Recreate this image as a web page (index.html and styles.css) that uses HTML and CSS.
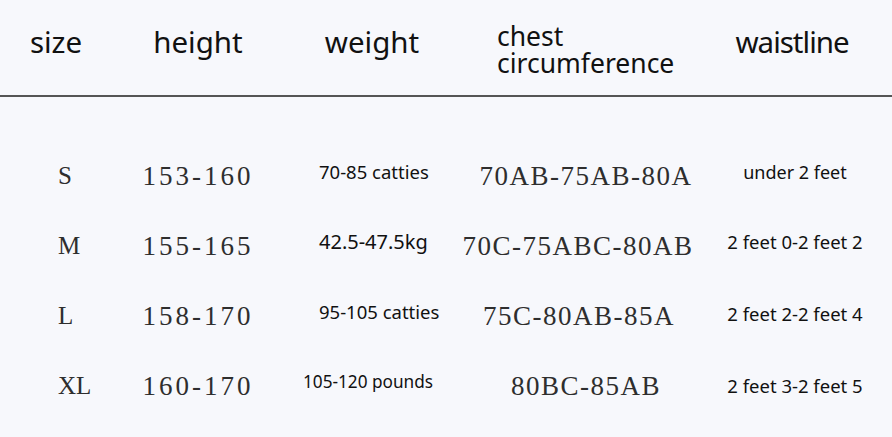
FILE: index.html
```html
<!DOCTYPE html>
<html>
<head>
<meta charset="utf-8">
<link rel="stylesheet" href="styles.css">
</head>
<body>
<div class="chart">
  <div class="head">
    <div class="h c-size">size</div>
    <div class="h c-height">height</div>
    <div class="h c-weight">weight</div>
    <div class="h c-chest"><div class="ln">chest</div><div class="ln">circumference</div></div>
    <div class="h c-waist">waistline</div>
  </div>
  <div class="body">
    <div class="row">
      <div class="d size">S</div>
      <div class="d serif height">153-160</div>
      <div class="d sans weight up">70-85 catties</div>
      <div class="d serif chest">70AB-75AB-80A</div>
      <div class="d sans waist up s18">under 2 feet</div>
    </div>
    <div class="row">
      <div class="d size">M</div>
      <div class="d serif height">155-165</div>
      <div class="d sans weight big up">42.5-47.5kg</div>
      <div class="d serif chest wide">70C-75ABC-80AB</div>
      <div class="d sans waist up">2 feet 0-2 feet 2</div>
    </div>
    <div class="row">
      <div class="d size">L</div>
      <div class="d serif height">158-170</div>
      <div class="d sans weight up">95-105 catties</div>
      <div class="d serif chest shiftl">75C-80AB-85A</div>
      <div class="d sans waist up2">2 feet 2-2 feet 4</div>
    </div>
    <div class="row">
      <div class="d size">XL</div>
      <div class="d serif height">160-170</div>
      <div class="d sans weight left up s17">105-120 pounds</div>
      <div class="d serif chest">80BC-85AB</div>
      <div class="d sans waist">2 feet 3-2 feet 5</div>
    </div>
  </div>
</div>
</body>
</html>
```
FILE: styles.css
```css
html, body {
  margin: 0;
  padding: 0;
  background: #f7f8fc;
}
.chart {
  width: 892px;
  height: 437px;
  background: #f7f8fc;
  font-family: "Noto Sans", "Open Sans", sans-serif;
  color: #111;
}
.head {
  display: grid;
  grid-template-columns: 112px 172px 176px 252px 180px;
  border-bottom: 2px solid #555;
  box-sizing: border-box;
  height: 97px;
  align-items: center;
}
.h {
  font-size: 29.5px;
  text-align: center;
  line-height: 30px;
  padding-bottom: 12px;
}
.c-chest {
  text-align: left;
  padding-left: 37px;
  font-size: 26.5px;
  line-height: 27px;
  padding-bottom: 0;
  padding-top: 4px;
}
.c-waist {
  padding-right: 20px;
  letter-spacing: -1px;
}

.body {
  padding-top: 61px;
  display: flex;
  flex-direction: column;
}
.row {
  display: grid;
  grid-template-columns: 112px 172px 176px 252px 180px;
  height: 70px;
  align-items: start;
}
.d {
  white-space: nowrap;
}
.serif {
  font-family: "Liberation Serif", "Times New Roman", serif;
  font-size: 27px;
  letter-spacing: 3px;
  color: #2e2e2e;
  text-align: center;
  line-height: 36px;
}
.chest {
  letter-spacing: 1.5px;
}
.size {
  font-family: "Liberation Serif", "Times New Roman", serif;
  font-size: 25px;
  color: #2e2e2e;
  padding-left: 58px;
  line-height: 36px;
}
.sans {
  font-family: "Noto Sans", "Open Sans", sans-serif;
  font-size: 18.5px;
  line-height: 36px;
  color: #111;
}
.weight {
  padding-left: 35px;
}
.weight.left { padding-left: 19px; }
.weight.big { font-size: 20px; }
.s17 { font-size: 17.2px; }
.s18 { font-size: 18px; }
.up { margin-top: -4px; }
.up2 { margin-top: -2px; }
.chest.wide { padding-right: 16px; }
.chest.shiftl { padding-right: 14px; }
.waist {
  text-align: center;
  padding-right: 14px;
}
```
